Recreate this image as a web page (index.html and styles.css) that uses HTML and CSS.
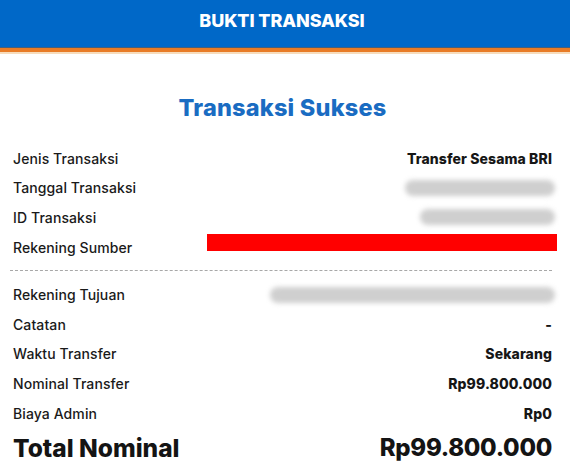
FILE: index.html
```html
<!DOCTYPE html>
<html lang="id">
<head>
<meta charset="utf-8">
<title>Bukti Transaksi</title>
<link rel="stylesheet" href="styles.css">
</head>
<body>
<header class="topbar">BUKTI TRANSAKSI</header>
<div class="stripe"></div>
<main class="receipt">
  <h1 class="title">Transaksi Sukses</h1>
  <section class="group">
    <div class="row"><span class="label">Jenis Transaksi</span><span class="value">Transfer Sesama BRI</span></div>
    <div class="row"><span class="label">Tanggal Transaksi</span><span class="blur blur-date"></span></div>
    <div class="row"><span class="label">ID Transaksi</span><span class="blur blur-id"></span></div>
    <div class="row"><span class="label">Rekening Sumber</span><span class="redact"></span></div>
  </section>
  <hr class="divider">
  <section class="group">
    <div class="row"><span class="label">Rekening Tujuan</span><span class="blur blur-dest"></span></div>
    <div class="row"><span class="label">Catatan</span><span class="value">-</span></div>
    <div class="row"><span class="label">Waktu Transfer</span><span class="value">Sekarang</span></div>
    <div class="row"><span class="label">Nominal Transfer</span><span class="value">Rp99.800.000</span></div>
    <div class="row"><span class="label">Biaya Admin</span><span class="value">Rp0</span></div>
    <div class="row total"><span class="label">Total Nominal</span><span class="value">Rp99.800.000</span></div>
  </section>
</main>
</body>
</html>
```
FILE: styles.css
```css
* { box-sizing: border-box; }
html, body { margin: 0; padding: 0; background: #fff; }
body { font-family: "Inter", "Liberation Sans", sans-serif; color: #1c1c1c; }

.topbar {
  height: 47px;
  background: #0068c8;
  color: #fff;
  font-weight: 800;
  font-size: 18px;
  letter-spacing: -0.1px;
  display: flex;
  align-items: center;
  justify-content: center;
  padding: 0 6px 6px 0;
}
.stripe {
  height: 7px;
  background: #e87b26;
  border-top: 1px solid #45607c;
  border-bottom: 2px solid #f7dcbc;
}

.receipt { padding: 0 18px 0 13px; }
.title {
  margin: 41px 0 22.5px;
  text-align: center;
  font-size: 23.5px;
  line-height: 26px;
  font-weight: 800;
  color: #1a6cc2;
  letter-spacing: 0.2px;
}

.group { display: flex; flex-direction: column; }
.row {
  height: 29.6px;
  display: flex;
  align-items: center;
  justify-content: space-between;
  font-size: 14px;
}
.label { color: #1a1a1a; font-weight: 500; letter-spacing: 0.1px; }
.value { font-weight: 800; color: #161616; font-size: 14px; letter-spacing: 0.1px; }

.blur {
  height: 16px;
  background: #cfcfcf;
  border-radius: 8px;
  filter: blur(2.5px);
  margin-right: -3px;
}
.blur-date { width: 150px; }
.blur-id { width: 135px; }
.blur-dest { width: 285px; }

.redact {
  align-self: flex-start;
  width: 350px;
  height: 17px;
  margin-top: 2px;
  background: #ff0000;
  margin-right: -5px;
}

.divider {
  margin: 8px 0 9px -3px;
  border: 0;
  border-top: 1px dashed #a8a8a8;
  height: 0;
}

.row.total { height: 40px; }
.total .label, .total .value {
  font-size: 24.5px;
  font-weight: 800;
  color: #141414;
  letter-spacing: 0;
}
.total .value { font-size: 24px; letter-spacing: -0.3px; }
```
